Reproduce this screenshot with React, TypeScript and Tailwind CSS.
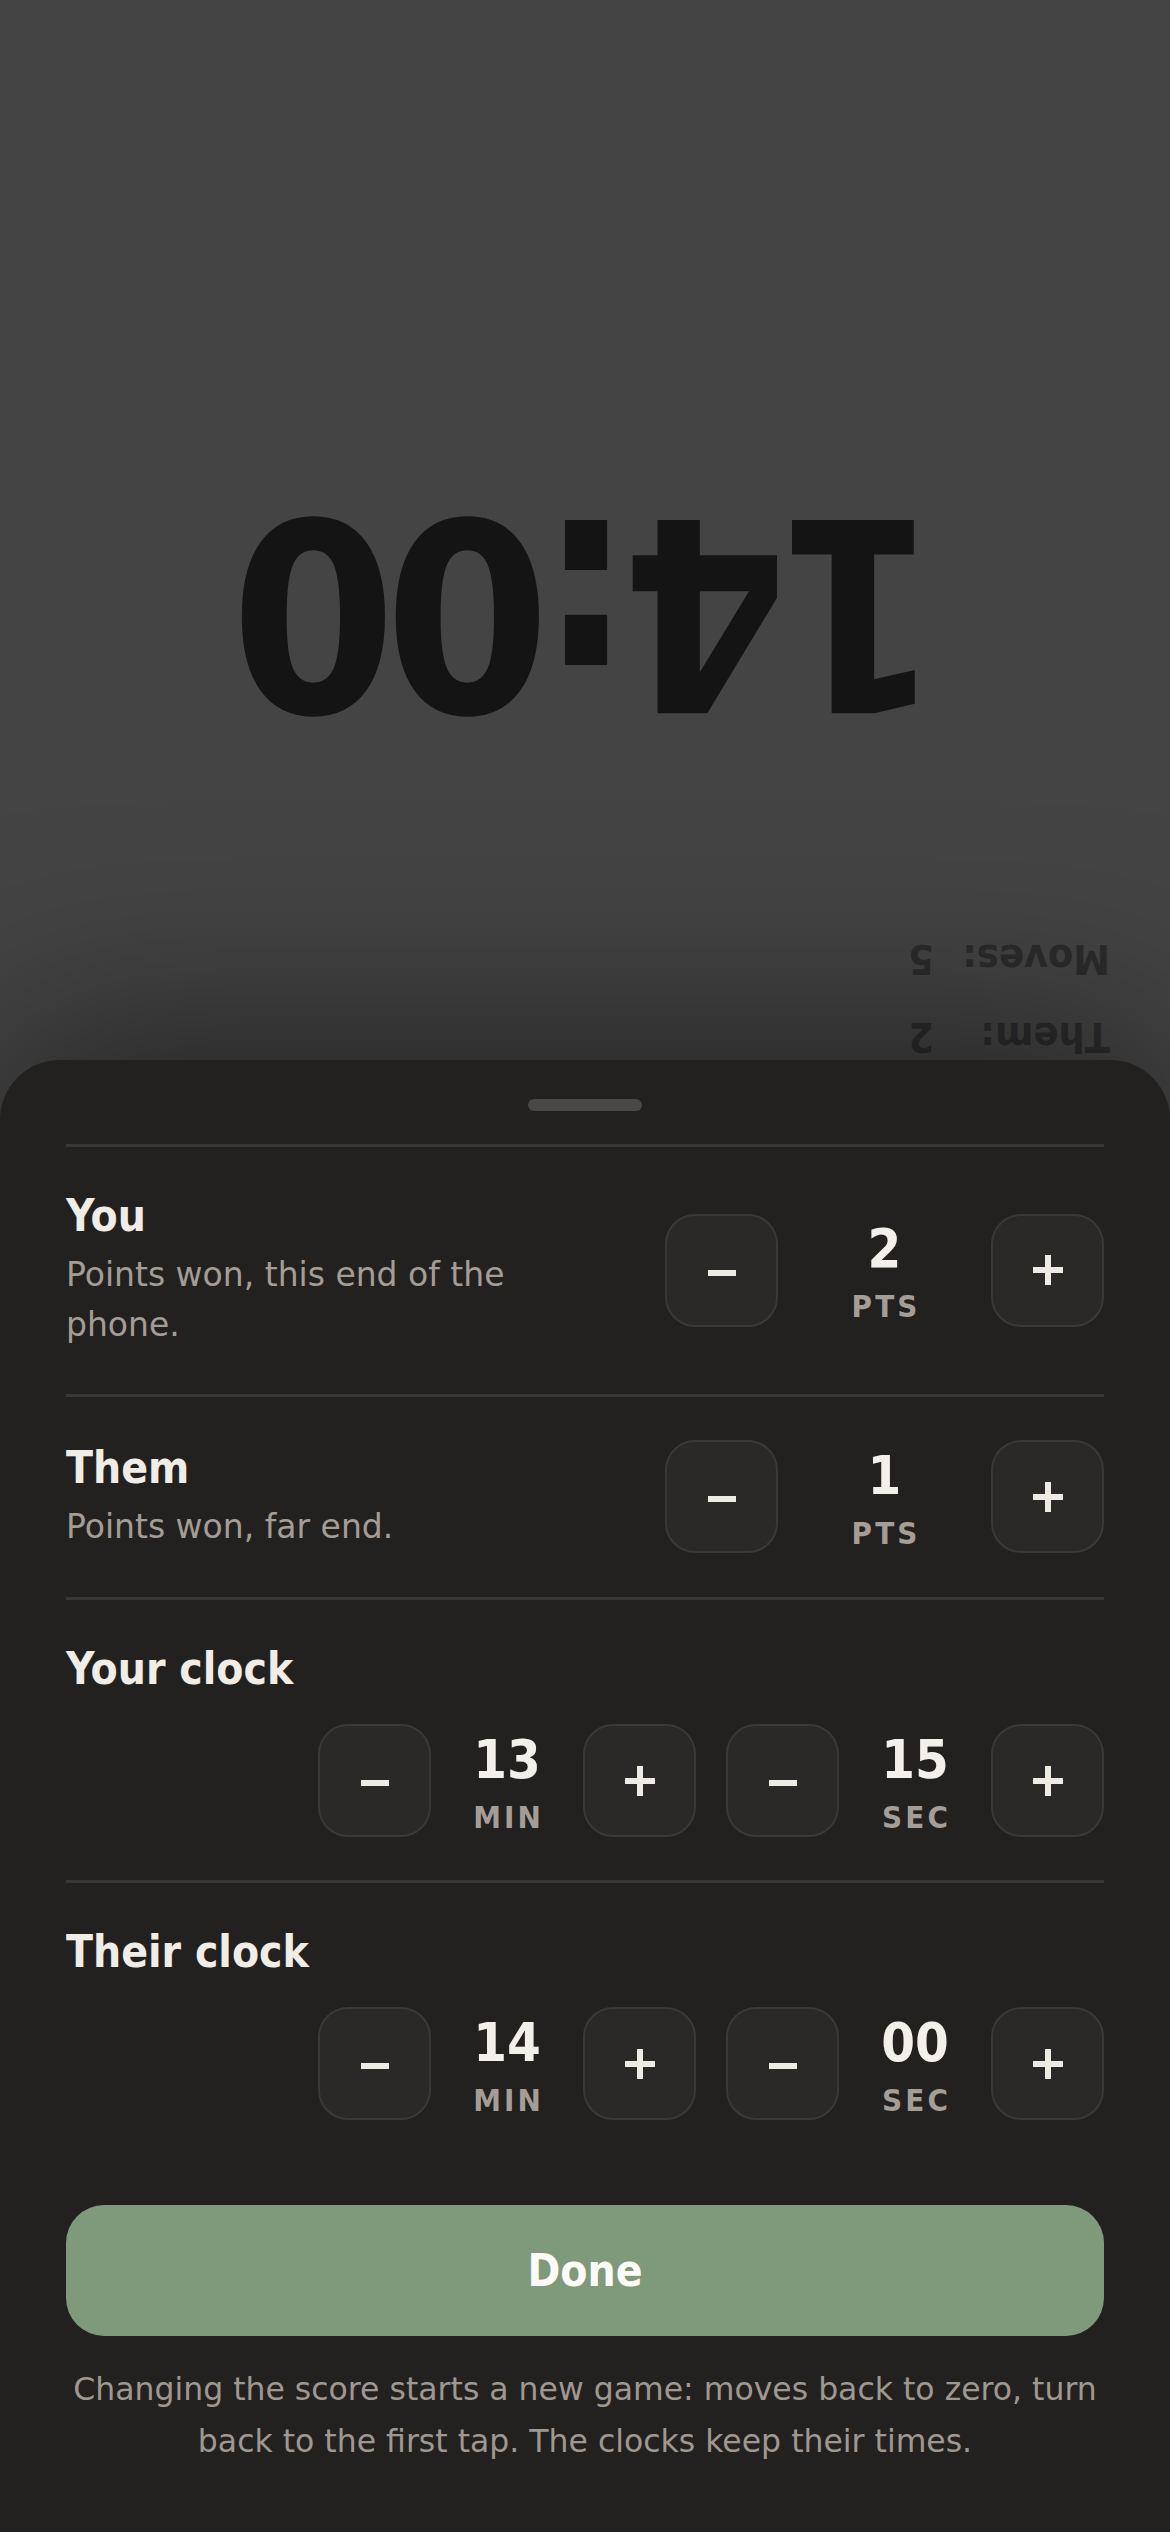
import React from "react";

function Minus() {
  return (
    <svg width="28" height="6" viewBox="0 0 28 6" className="mt-[5px]">
      <rect x="0" y="0" width="28" height="6" fill="#eeebe5" />
    </svg>
  );
}

function Plus() {
  return (
    <svg width="30" height="30" viewBox="0 0 30 30">
      <rect x="0" y="12" width="30" height="6" fill="#eeebe5" />
      <rect x="12" y="0" width="6" height="30" fill="#eeebe5" />
    </svg>
  );
}

function StepButton({ kind }: { kind: "minus" | "plus" }) {
  return (
    <button className="flex h-[113px] w-[113px] shrink-0 items-center justify-center rounded-[30px] border-2 border-[#3b3937] bg-[#2a2928]">
      {kind === "minus" ? <Minus /> : <Plus />}
    </button>
  );
}

function Value({ value, unit, wide }: { value: string; unit: string; wide?: boolean }) {
  return (
    <div
      className={
        (wide ? "w-[213px]" : "w-[152px]") +
        " flex flex-col items-center pt-[4px]"
      }
    >
      <div className="text-[54px] font-bold leading-none text-[#f3f0eb]">{value}</div>
      <div className="mt-[15px] pl-[0.1em] text-[31px] font-bold leading-none tracking-[0.1em] text-[#a59e97]">
        {unit}
      </div>
    </div>
  );
}

function PointsRow({ title, desc, value }: { title: string; desc: string; value: string }) {
  return (
    <div className="flex items-center justify-between border-t-[3px] border-[#393735] pt-[43px] pb-[44px]">
      <div className="flex flex-col">
        <div className="text-[44px] font-bold leading-[52px] text-[#f0ece6]">{title}</div>
        <div className="mt-[8px] max-w-[520px] font-['DejaVu_Sans',sans-serif] text-[33px] leading-[50px] text-[#a49d96] font-stretch-normal">
          {desc}
        </div>
      </div>
      <div className="flex items-center">
        <StepButton kind="minus" />
        <Value value={value} unit="PTS" wide />
        <StepButton kind="plus" />
      </div>
    </div>
  );
}

function ClockRow({ title, min, sec, last }: { title: string; min: string; sec: string; last?: boolean }) {
  return (
    <div className={"flex flex-col border-t-[3px] border-[#393735] pt-[43px] " + (last ? "" : "pb-[43px]")}>
      <div className="text-[44px] font-bold leading-[52px] text-[#f0ece6]">{title}</div>
      <div className="mt-[29px] flex items-center justify-end gap-[30px]">
        <div className="flex items-center">
          <StepButton kind="minus" />
          <Value value={min} unit="MIN" />
          <StepButton kind="plus" />
        </div>
        <div className="flex items-center">
          <StepButton kind="minus" />
          <Value value={sec} unit="SEC" />
          <StepButton kind="plus" />
        </div>
      </div>
    </div>
  );
}

export default function App() {
  return (
    <div className="relative h-[2532px] w-[1170px] overflow-hidden bg-[#444444] font-['DejaVu_Sans_Condensed','DejaVu_Sans',sans-serif] font-stretch-semi-condensed">
      {/* Opponent half, upside down */}
      <div className="flex h-[1266px] rotate-180 flex-col">
        <div className="grid grid-cols-[176px_auto] gap-y-[30px] pt-[205px] pl-[60px] text-[41px] font-bold leading-[48px] text-[#2c2c2c]">
          <span>Them:</span>
          <span>2</span>
          <span>Moves:</span>
          <span>5</span>
        </div>
        <div className="mt-[191px] pr-[14px] text-center text-[265px] font-bold leading-none tracking-[-0.045em] text-[#141414]">
          14:00
        </div>
      </div>
      <div className="h-[1266px]" />

      {/* Bottom sheet */}
      <div className="absolute top-[1060px] right-0 bottom-0 left-0 flex flex-col rounded-t-[60px] bg-[#222120] px-[66px] shadow-[0_-20px_200px_rgba(0,0,0,0.5)]">
        <div className="mx-auto mt-[39px] h-[12px] w-[114px] rounded-full bg-[#4a4745]" />
        <div className="mt-[33px] flex flex-col">
          <PointsRow title="You" desc="Points won, this end of the phone." value="2" />
          <PointsRow title="Them" desc="Points won, far end." value="1" />
          <ClockRow title="Your clock" min="13" sec="15" />
          <ClockRow title="Their clock" min="14" sec="00" last />
        </div>
        <button className="mt-[85px] flex h-[131px] w-full items-center justify-center rounded-[38px] bg-[#7f9a7a] text-[44px] font-bold text-[#fbfaf6]">
          Done
        </button>
        <p className="-mx-[10px] mt-[27px] text-center font-['DejaVu_Sans',sans-serif] text-[31.5px] leading-[52px] text-[#9f9891] font-stretch-normal">
          Changing the score starts a new game: moves back to zero, turn back to the first tap. The clocks keep their times.
        </p>
      </div>
    </div>
  );
}
